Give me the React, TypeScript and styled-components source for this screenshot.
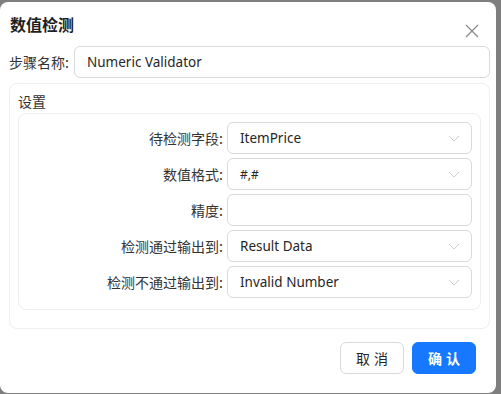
import React from 'react';
import styled, { createGlobalStyle } from 'styled-components';

const GlobalStyle = createGlobalStyle`
  html, body {
    margin: 0;
    padding: 0;
    background: #7e7e7e;
  }
  body {
    font-family: "Noto Sans", "Noto Sans CJK SC", sans-serif;
    font-size: 14px;
    color: rgba(0, 0, 0, 0.85);
  }
`;

const Dialog = styled.div`
  box-sizing: border-box;
  width: 496px;
  height: 391px;
  margin-top: 2px;
  background: #fff;
  border-radius: 8px;
  padding: 11px 6px 0 9px;
  display: flex;
  flex-direction: column;
`;

const Header = styled.div`
  display: flex;
  justify-content: space-between;
  align-items: flex-start;
  height: 22px;
  margin-bottom: 11px;
`;

const Title = styled.div`
  font-family: "Noto Sans CJK SC", sans-serif;
  font-size: 16px;
  font-weight: 700;
  line-height: 22px;
  color: #1f1f1f;
  padding-left: 1px;
`;

const CloseButton = styled.button`
  border: none;
  background: none;
  padding: 0;
  width: 16px;
  height: 16px;
  margin: 10px 10px 0 0;
  display: flex;
  align-items: center;
  justify-content: center;
  cursor: pointer;
`;

const NameRow = styled.div`
  display: flex;
  align-items: center;
`;

const NameLabel = styled.label`
  width: 65px;
  flex: none;
  font-family: "Noto Sans CJK SC", sans-serif;
  color: #333;
  line-height: 22px;
`;

const Field = styled.div`
  box-sizing: border-box;
  flex: 1;
  height: 32px;
  border: 1px solid #d9d9d9;
  border-radius: 6px;
  padding: 0 11px 0 12px;
  display: flex;
  align-items: center;
  justify-content: space-between;
  color: #262626;
  background: #fff;
`;

const FieldText = styled.span<{ small?: boolean }>`
  white-space: nowrap;
  font-size: ${(p) => (p.small ? '12px' : '13.5px')};
`;

const Section = styled.div`
  box-sizing: border-box;
  margin-top: 5px;
  border: 1px solid #efefef;
  border-radius: 8px;
  padding: 6px 8px 18px 8px;
`;

const SectionTitle = styled.div`
  font-family: "Noto Sans CJK SC", sans-serif;
  line-height: 22px;
  color: #333;
  margin-bottom: 1px;
`;

const InnerBox = styled.div`
  border: 1px solid #efefef;
  border-radius: 8px;
  padding: 8px 8px 11px 8px;
  display: grid;
  grid-template-columns: 1fr 245px;
  column-gap: 4px;
  row-gap: 4px;
`;

const RowLabel = styled.label`
  font-family: "Noto Sans CJK SC", sans-serif;
  color: #333;
  text-align: right;
  line-height: 32px;
  white-space: nowrap;
`;

const Footer = styled.div`
  display: flex;
  justify-content: flex-end;
  gap: 8px;
  margin-top: 13px;
  padding-right: 14px;
`;

const Button = styled.button<{ primary?: boolean }>`
  box-sizing: border-box;
  width: 64px;
  height: 32px;
  border-radius: 6px;
  font-family: "Noto Sans CJK SC", sans-serif;
  font-size: 14px;
  letter-spacing: 4px;
  text-indent: 4px;
  cursor: pointer;
  border: 1px solid ${(p) => (p.primary ? '#1677ff' : '#d9d9d9')};
  background: ${(p) => (p.primary ? '#1677ff' : '#fff')};
  color: ${(p) => (p.primary ? '#fff' : '#262626')};
  font-weight: ${(p) => (p.primary ? 600 : 400)};
`;

const Chevron = () => (
  <svg width="12" height="7" viewBox="0 0 12 7" fill="none">
    <path d="M1 1l5 5 5-5" stroke="#cfcfcf" strokeWidth="1" />
  </svg>
);

const CloseIcon = () => (
  <svg width="14" height="14" viewBox="0 0 14 14" fill="none">
    <path d="M1 1l12 12M13 1L1 13" stroke="#8a8a8a" strokeWidth="1.3" />
  </svg>
);

const rows = [
  { label: '待检测字段:', value: 'ItemPrice', select: true },
  { label: '数值格式:', value: '#,#', select: true, small: true },
  { label: '精度:', value: '', select: false },
  { label: '检测通过输出到:', value: 'Result Data', select: true },
  { label: '检测不通过输出到:', value: 'Invalid Number', select: true },
];

export default function App() {
  return (
    <>
      <GlobalStyle />
      <Dialog>
        <Header>
          <Title>数值检测</Title>
          <CloseButton aria-label="close">
            <CloseIcon />
          </CloseButton>
        </Header>
        <NameRow>
          <NameLabel>步骤名称:</NameLabel>
          <Field>
            <FieldText>Numeric Validator</FieldText>
          </Field>
        </NameRow>
        <Section>
          <SectionTitle>设置</SectionTitle>
          <InnerBox>
            {rows.map((r) => (
              <React.Fragment key={r.label}>
                <RowLabel>{r.label}</RowLabel>
                <Field>
                  <FieldText small={r.small}>{r.value}</FieldText>
                  {r.select && <Chevron />}
                </Field>
              </React.Fragment>
            ))}
          </InnerBox>
        </Section>
        <Footer>
          <Button>取消</Button>
          <Button primary>确认</Button>
        </Footer>
      </Dialog>
    </>
  );
}
